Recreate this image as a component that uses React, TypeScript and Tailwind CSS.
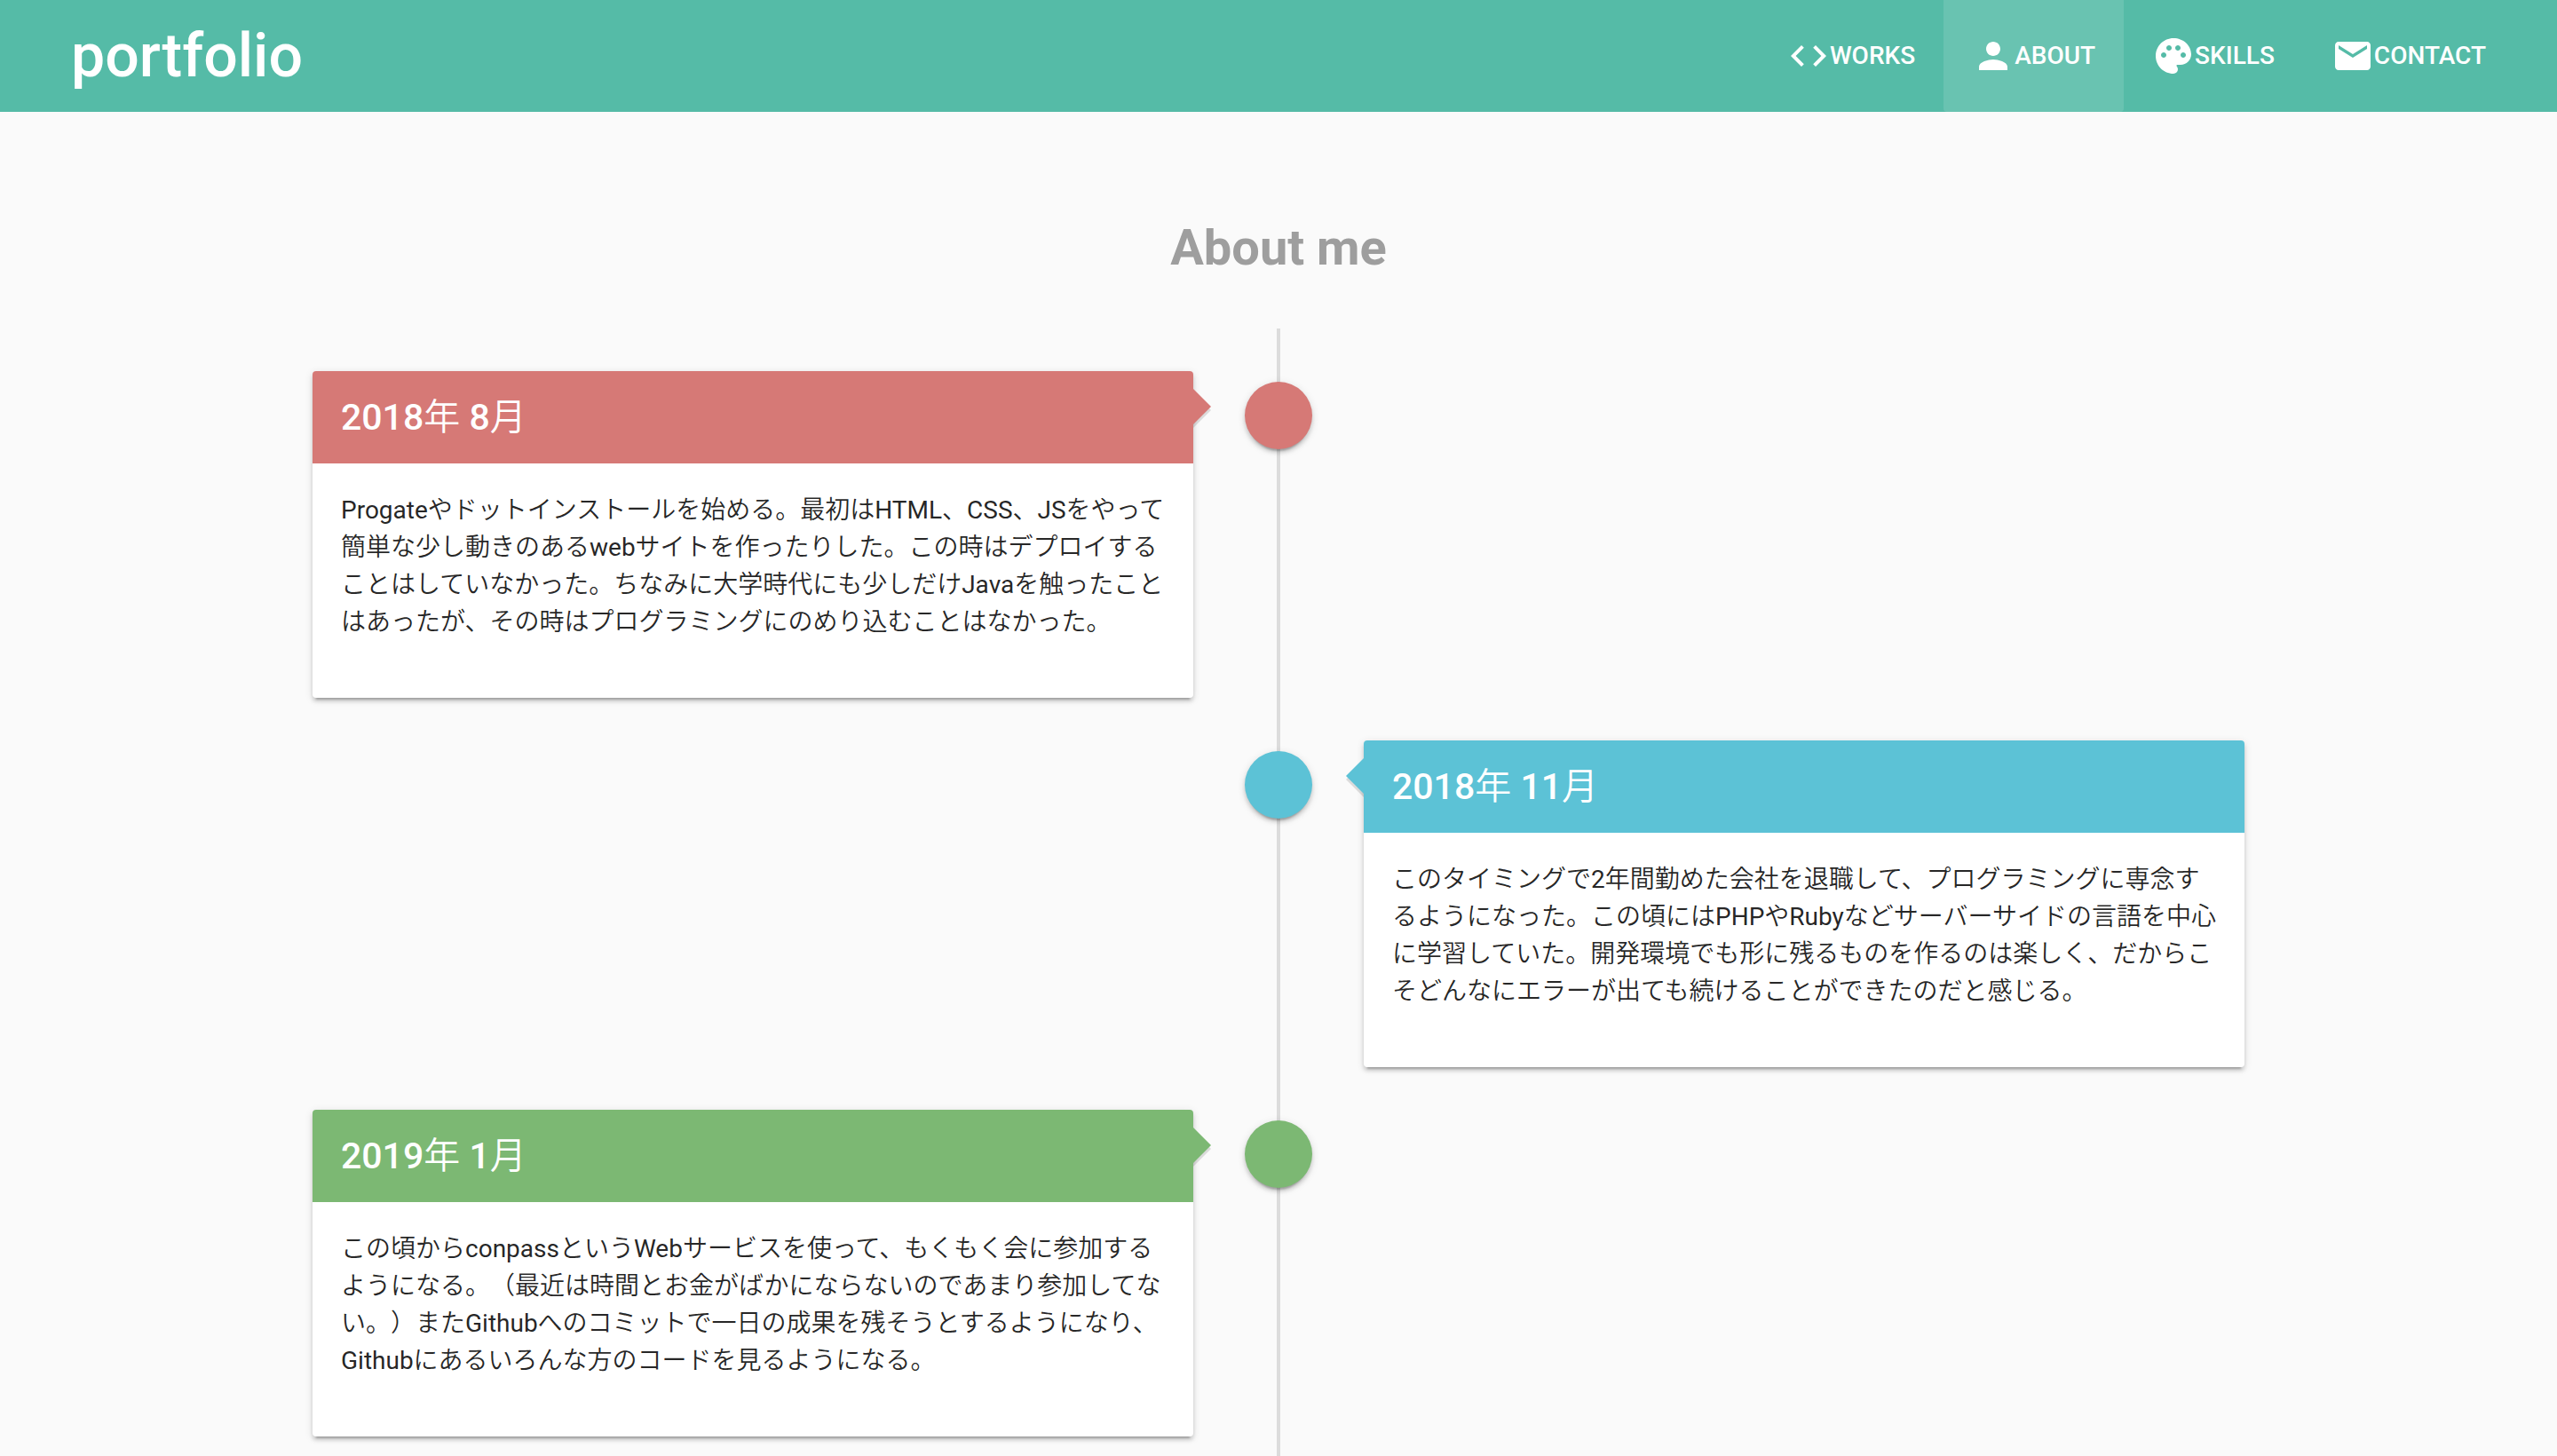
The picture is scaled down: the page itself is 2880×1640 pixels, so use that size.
import type { ComponentType } from "react";
import { MdCode, MdEmail, MdPalette, MdPerson } from "react-icons/md";

type NavItem = {
  label: string;
  href: string;
  icon: ComponentType<{ className?: string }>;
  active?: boolean;
};

const navItems: NavItem[] = [
  { label: "WORKS", href: "#works", icon: MdCode },
  { label: "ABOUT", href: "#about", icon: MdPerson, active: true },
  { label: "SKILLS", href: "#skills", icon: MdPalette },
  { label: "CONTACT", href: "#contact", icon: MdEmail },
];

type Entry = {
  year: string;
  month: string;
  color: string;
  side: "left" | "right";
  text: string;
};

const entries: Entry[] = [
  {
    year: "2018",
    month: "8",
    color: "bg-[#d67976]",
    side: "left",
    text: "Progateやドットインストールを始める。最初はHTML、CSS、JSをやって簡単な少し動きのあるwebサイトを作ったりした。この時はデプロイすることはしていなかった。ちなみに大学時代にも少しだけJavaを触ったことはあったが、その時はプログラミングにのめり込むことはなかった。",
  },
  {
    year: "2018",
    month: "11",
    color: "bg-[#5cc2d6]",
    side: "right",
    text: "このタイミングで2年間勤めた会社を退職して、プログラミングに専念するようになった。この頃にはPHPやRubyなどサーバーサイドの言語を中心に学習していた。開発環境でも形に残るものを作るのは楽しく、だからこそどんなにエラーが出ても続けることができたのだと感じる。",
  },
  {
    year: "2019",
    month: "1",
    color: "bg-[#7cb873]",
    side: "left",
    text: "この頃からconpassというWebサービスを使って、もくもく会に参加するようになる。（最近は時間とお金がばかにならないのであまり参加してない。）またGithubへのコミットで一日の成果を残そうとするようになり、Githubにあるいろんな方のコードを見るようになる。",
  },
];

function Header() {
  return (
    <header className="flex h-[126px] items-stretch justify-between bg-[#55bba7] pr-12 pl-20 text-white">
      <a href="#top" className="flex items-center text-[68px] leading-none font-medium">
        portfolio
      </a>
      <nav className="flex">
        {navItems.map(({ label, href, icon: Icon, active }) => (
          <a
            key={label}
            href={href}
            aria-current={active ? "page" : undefined}
            className={`flex items-center rounded-b px-8 text-[28px] leading-none font-medium ${active ? "bg-white/12" : ""}`}
          >
            <Icon className="size-12" />
            {label}
          </a>
        ))}
      </nav>
    </header>
  );
}

function Card({ entry }: { entry: Entry }) {
  const left = entry.side === "left";
  return (
    <article
      className={`relative rounded bg-white shadow-[0_6px_2px_-4px_rgba(0,0,0,0.2),0_4px_4px_0_rgba(0,0,0,0.14),0_2px_10px_0_rgba(0,0,0,0.12)] ${left ? "col-start-1" : "col-start-3"}`}
    >
      <span
        className={`absolute top-6 h-10 w-5 bg-black/12 ${left ? "left-full [clip-path:polygon(0_0,100%_50%,0_100%)]" : "right-full [clip-path:polygon(100%_0,0_50%,100%_100%)]"}`}
      />
      <span
        className={`absolute top-5 h-10 w-5 ${entry.color} ${left ? "left-full [clip-path:polygon(0_0,100%_50%,0_100%)]" : "right-full [clip-path:polygon(100%_0,0_50%,100%_100%)]"}`}
      />
      <h2 className={`rounded-t px-8 py-6 text-[41px] leading-14 font-medium text-white ${entry.color}`}>
        {entry.year}
        <span className="font-light">年</span> {entry.month}
        <span className="font-light">月</span>
      </h2>
      <p className="px-8 pt-8 pb-16 text-[28px] leading-[42px] text-black/87 [text-spacing-trim:space-all]">
        {entry.text}
      </p>
    </article>
  );
}

export default function App() {
  return (
    <div
      className="flex min-h-screen flex-col bg-[#fafafa] font-['Roboto','Noto_Sans_CJK_JP_DemiLight','Noto_Sans_CJK_JP',sans-serif]"
      lang="ja"
    >
      <Header />
      <main className="flex flex-1 flex-col px-[352px]">
        <h1 className="pt-[123px] pb-[61px] text-center text-[56px] leading-[60px] font-bold text-[#9e9e9e]">
          About me
        </h1>
        <div className="relative flex-1 pt-6">
          <div className="absolute inset-y-0 left-1/2 w-1 -translate-x-1/2 bg-[#dcdcdc]" />
          <ol>
            {entries.map((entry) => (
              <li
                key={entry.text}
                className="relative grid grid-cols-[1fr_192px_1fr] py-6 last:pb-5"
              >
                <Card entry={entry} />
                <span
                  className={`col-start-2 row-start-1 mt-3 size-[76px] justify-self-center rounded-full shadow-[0_6px_2px_-4px_rgba(0,0,0,0.2),0_4px_4px_0_rgba(0,0,0,0.14),0_2px_10px_0_rgba(0,0,0,0.12)] ${entry.color}`}
                />
              </li>
            ))}
          </ol>
        </div>
      </main>
    </div>
  );
}
